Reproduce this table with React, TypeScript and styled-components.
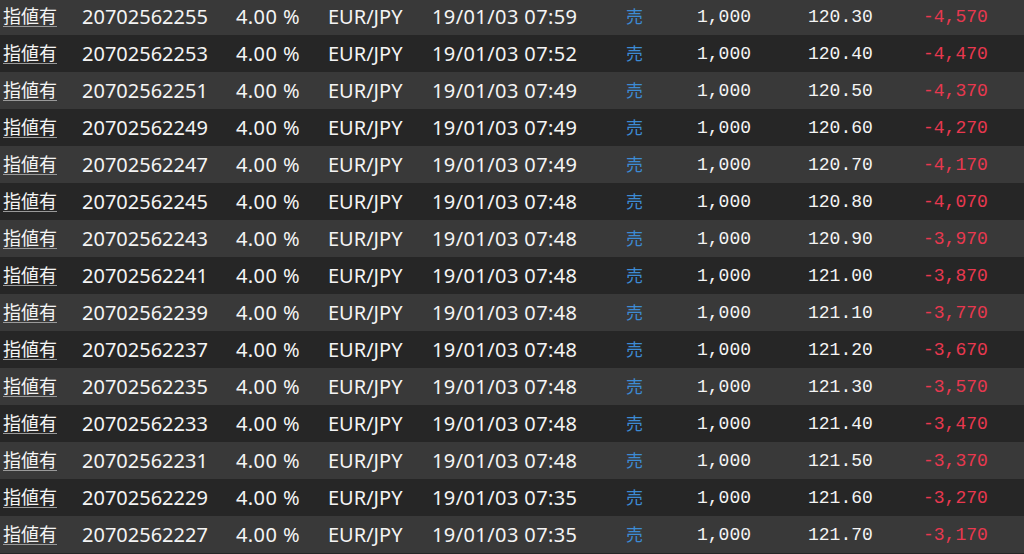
import styled, { createGlobalStyle } from "styled-components";

const GlobalStyle = createGlobalStyle`
  html, body {
    margin: 0;
    padding: 0;
    background: #262626;
    overflow: hidden;
  }
`;

const Table = styled.div`
  display: flex;
  flex-direction: column;
  margin-top: -2px;
  font-family: "Noto Sans", "Noto Sans CJK JP", sans-serif;
  color: #f4f4f4;
`;

const Row = styled.div<{ $odd: boolean }>`
  display: grid;
  grid-template-columns: 79px 154px 92px 104px 194px 71px 111px 115px 1fr;
  align-items: center;
  height: 37px;
  padding-left: 3px;
  background: ${(p) => (p.$odd ? "#262626" : "#393939")};
`;

const Cell = styled.div<{ $wide?: boolean }>`
  font-size: 20px;
  white-space: nowrap;
  line-height: 1;
  letter-spacing: ${(p) => (p.$wide ? "0.4px" : "0")};
`;

const OrderLink = styled.a`
  font-family: "Noto Sans CJK JP", sans-serif;
  font-size: 18px;
  color: #f4f4f4;
  text-decoration: underline;
  text-decoration-color: #9a9a9a;
  text-underline-offset: 3px;
  line-height: 1;
`;

const Side = styled.div`
  font-family: "Noto Sans CJK JP", sans-serif;
  font-size: 17px;
  color: #3d8bd4;
  line-height: 1;
  margin-top: -3px;
`;

const Mono = styled.div<{ $neg?: boolean }>`
  font-family: "Liberation Mono", "DejaVu Sans Mono", monospace;
  font-size: 18px;
  line-height: 1;
  color: ${(p) => (p.$neg ? "#e8384f" : "#f4f4f4")};
`;

const rows = [
  ["20702562255", "19/01/03 07:59", "120.30", "-4,570"],
  ["20702562253", "19/01/03 07:52", "120.40", "-4,470"],
  ["20702562251", "19/01/03 07:49", "120.50", "-4,370"],
  ["20702562249", "19/01/03 07:49", "120.60", "-4,270"],
  ["20702562247", "19/01/03 07:49", "120.70", "-4,170"],
  ["20702562245", "19/01/03 07:48", "120.80", "-4,070"],
  ["20702562243", "19/01/03 07:48", "120.90", "-3,970"],
  ["20702562241", "19/01/03 07:48", "121.00", "-3,870"],
  ["20702562239", "19/01/03 07:48", "121.10", "-3,770"],
  ["20702562237", "19/01/03 07:48", "121.20", "-3,670"],
  ["20702562235", "19/01/03 07:48", "121.30", "-3,570"],
  ["20702562233", "19/01/03 07:48", "121.40", "-3,470"],
  ["20702562231", "19/01/03 07:48", "121.50", "-3,370"],
  ["20702562229", "19/01/03 07:35", "121.60", "-3,270"],
  ["20702562227", "19/01/03 07:35", "121.70", "-3,170"],
];

export default function App() {
  return (
    <>
      <GlobalStyle />
      <Table>
        {rows.map(([id, time, price, pnl], idx) => (
          <Row key={id} $odd={idx % 2 === 1}>
            <div>
              <OrderLink>指値有</OrderLink>
            </div>
            <Cell>{id}</Cell>
            <Cell $wide>4.00 %</Cell>
            <Cell>EUR/JPY</Cell>
            <Cell $wide>{time}</Cell>
            <Side>売</Side>
            <Mono>1,000</Mono>
            <Mono>{price}</Mono>
            <Mono $neg>{pnl}</Mono>
          </Row>
        ))}
      </Table>
    </>
  );
}
